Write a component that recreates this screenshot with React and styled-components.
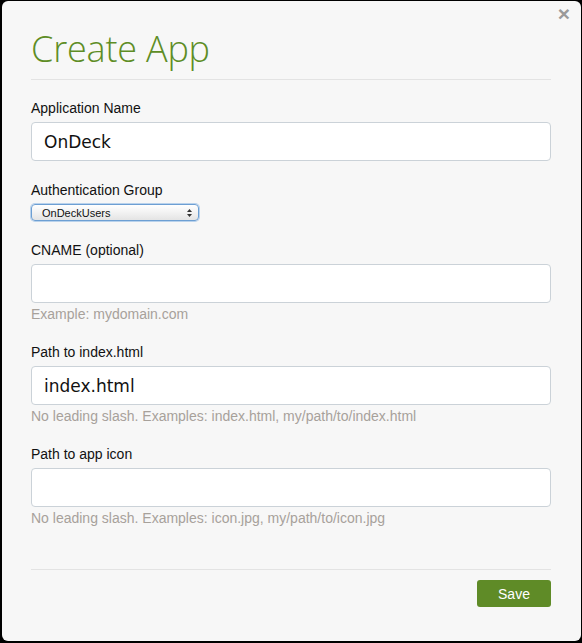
import React from "react";
import styled, { createGlobalStyle } from "styled-components";

const Global = createGlobalStyle`
  html, body { margin: 0; padding: 0; background: #000; }
  body { width: 582px; height: 643px; overflow: hidden; }
  * { box-sizing: border-box; }
`;

const Frame = styled.div`
  width: 582px;
  height: 643px;
  padding: 1px 1px 2px 2px;
  background: #000;
`;

const Panel = styled.div`
  position: relative;
  height: 100%;
  background: #f7f7f7;
  border-radius: 6px;
  padding: 0 30px 0 29px;
  display: flex;
  flex-direction: column;
`;

const Close = styled.button`
  position: absolute;
  top: 2px;
  right: 11px;
  border: none;
  background: none;
  padding: 0;
  color: #9a9a9a;
  font-family: "Liberation Sans", Arial, sans-serif;
  font-weight: bold;
  font-size: 21px;
  line-height: 21px;
  cursor: pointer;
`;

const Header = styled.div`
  padding-top: 26px;
  padding-bottom: 8px;
  border-bottom: 1px solid #e3e3e3;
`;

const Title = styled.h1`
  margin: 0;
  font-family: "Open Sans", sans-serif;
  font-weight: 300;
  font-size: 36px;
  line-height: 44px;
  color: #5e8d25;
  letter-spacing: -0.2px;
`;

const Form = styled.div`
  padding-top: 19px;
  flex: 1;
`;

const Field = styled.div`
  margin-bottom: 20px;
`;

const Label = styled.label`
  display: block;
  font-family: "Liberation Sans", Arial, sans-serif;
  font-size: 14px;
  line-height: 18px;
  color: #111;
  margin-bottom: 5px;
`;

const Input = styled.div`
  height: 39px;
  background: #fff;
  border: 1px solid #cbd2d8;
  border-radius: 4px;
  padding: 0 12px;
  display: flex;
  align-items: center;
  font-family: "DejaVu Sans", sans-serif;
  font-size: 17px;
  color: #111;
`;

const Help = styled.div`
  font-family: "Liberation Sans", Arial, sans-serif;
  font-size: 14px;
  line-height: 18px;
  color: #a7a19b;
  margin: 2px 0 1px;
`;

const Select = styled.div`
  width: 168px;
  height: 17px;
  border: 1px solid #6d9fd3;
  box-shadow: 0 0 0 1px #b9d2ec;
  border-radius: 4px;
  background: linear-gradient(#ffffff, #f2f2f2 50%, #e4e4e4);
  display: flex;
  align-items: center;
  justify-content: space-between;
  padding: 0 6px 0 10px;
  font-family: "Liberation Sans", Arial, sans-serif;
  font-size: 11px;
  color: #111;
`;

const Footer = styled.div`
  border-top: 1px solid #e3e3e3;
  padding-top: 10px;
  padding-bottom: 34px;
  display: flex;
  justify-content: flex-end;
`;

const SaveButton = styled.button`
  width: 74px;
  height: 27px;
  border: none;
  border-radius: 3px;
  background: #5f8b27;
  color: #fff;
  font-family: "Liberation Sans", Arial, sans-serif;
  font-size: 14px;
  cursor: pointer;
`;

const Arrows = () => (
  <svg width="5" height="8" viewBox="0 0 5 8">
    <path d="M2.5 0 L5 3 L0 3 Z" fill="#333" />
    <path d="M2.5 8 L5 5 L0 5 Z" fill="#333" />
  </svg>
);

export default function App() {
  return (
    <>
      <Global />
      <Frame>
        <Panel>
          <Close>×</Close>
          <Header>
            <Title>Create App</Title>
          </Header>
          <Form>
            <Field>
              <Label>Application Name</Label>
              <Input>OnDeck</Input>
            </Field>
            <Field>
              <Label>Authentication Group</Label>
              <Select>
                <span>OnDeckUsers</span>
                <Arrows />
              </Select>
            </Field>
            <Field>
              <Label>CNAME (optional)</Label>
              <Input />
              <Help>Example: mydomain.com</Help>
            </Field>
            <Field>
              <Label>Path to index.html</Label>
              <Input>index.html</Input>
              <Help>No leading slash. Examples: index.html, my/path/to/index.html</Help>
            </Field>
            <Field>
              <Label>Path to app icon</Label>
              <Input />
              <Help>No leading slash. Examples: icon.jpg, my/path/to/icon.jpg</Help>
            </Field>
          </Form>
          <Footer>
            <SaveButton>Save</SaveButton>
          </Footer>
        </Panel>
      </Frame>
    </>
  );
}
